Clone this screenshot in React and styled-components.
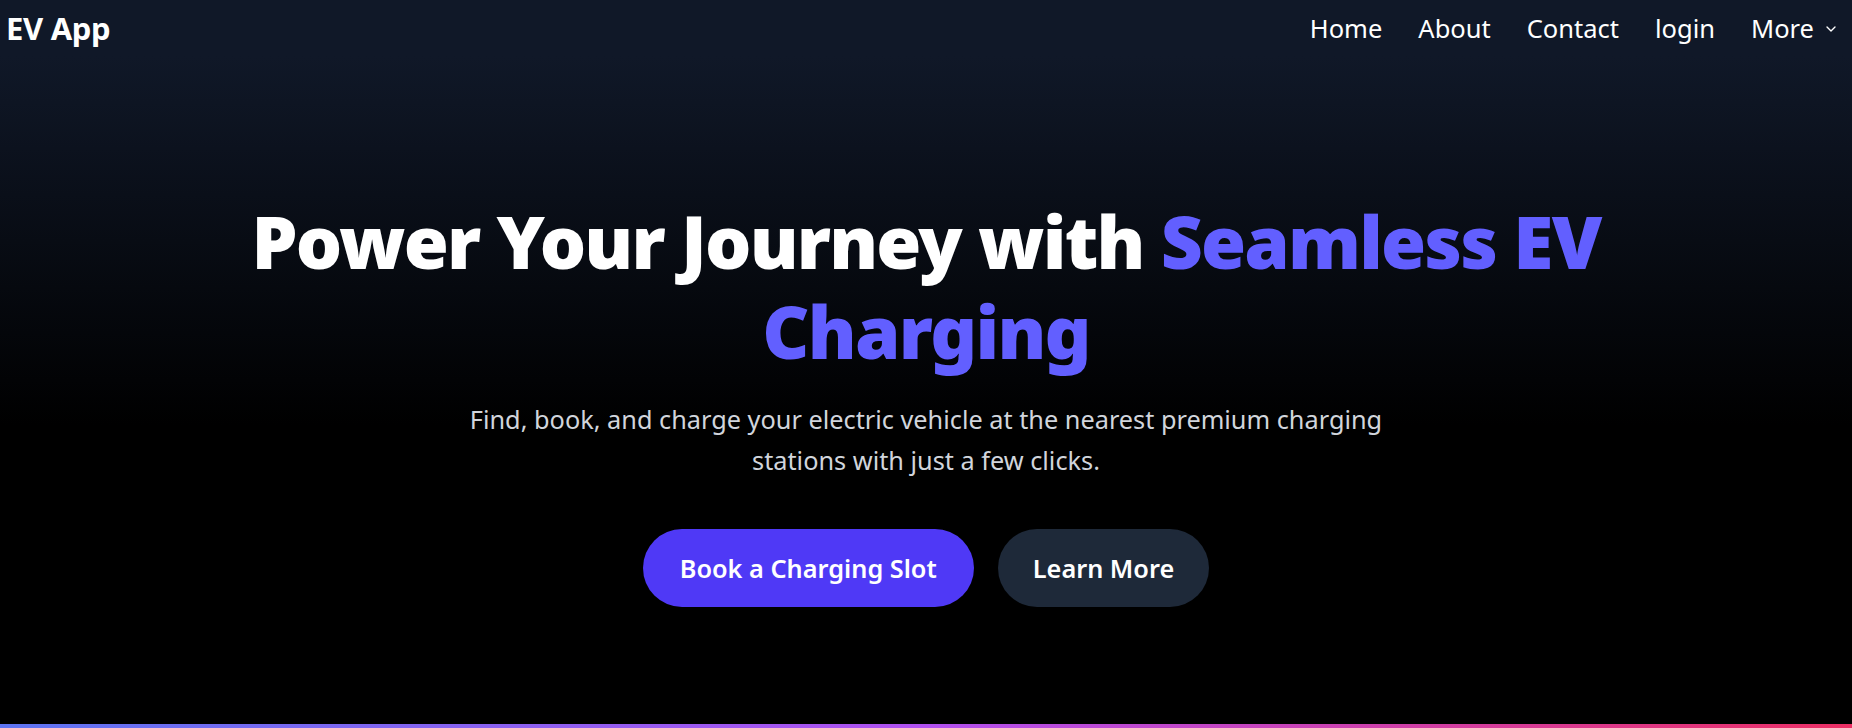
import React from "react"
import styled, { createGlobalStyle } from "styled-components"
import { ChevronDown } from "lucide-react"

const GlobalStyle = createGlobalStyle`
  html, body {
    margin: 0;
    padding: 0;
    background: #000;
  }
  body {
    font-family: "Noto Sans", "Open Sans", sans-serif;
    color: #fff;
  }
  * {
    box-sizing: border-box;
  }
`

const navLinks = ["Home", "About", "Contact", "login"]

const App = () => (
  <>
    <GlobalStyle />
    <Page>
      <NavBar>
        <Brand>EV App</Brand>
        <NavList>
          {navLinks.map(link => (
            <NavItem key={link}>{link}</NavItem>
          ))}
          <NavItem>
            More
            <Chevron size={16} strokeWidth={2} />
          </NavItem>
        </NavList>
      </NavBar>

      <Hero>
        <HeroInner>
          <Headline>
            Power Your Journey with <Accent>Seamless EV Charging</Accent>
          </Headline>
          <Lead>
            Find, book, and charge your electric vehicle at the nearest premium
            charging stations with just a few clicks.
          </Lead>
          <Actions>
            <PillButton variant="primary">Book a Charging Slot</PillButton>
            <PillButton variant="secondary">Learn More</PillButton>
          </Actions>
        </HeroInner>
      </Hero>

      <GradientRule />
    </Page>
  </>
)

const Page = styled.div`
  min-height: 728px;
  display: flex;
  flex-direction: column;
  background: #000;
`

const NavBar = styled.nav`
  height: 56px;
  display: flex;
  align-items: center;
  justify-content: space-between;
  padding: 0 13px 0 6px;
  background: #101828;
`

const Brand = styled.div`
  font-size: 31px;
  font-weight: 700;
  letter-spacing: -0.3px;
`

const NavList = styled.ul`
  display: flex;
  align-items: center;
  gap: 36px;
  list-style: none;
  margin: 0;
  padding: 0;
`

const NavItem = styled.li`
  display: flex;
  align-items: center;
  font-size: 25.5px;
  font-weight: 400;
  cursor: pointer;
`

const Chevron = styled(ChevronDown)`
  margin-left: 9px;
  margin-top: 2px;
`

const Hero = styled.section`
  height: 668px;
  background: linear-gradient(180deg, #101828 0px, #000 370px);
`

const HeroInner = styled.div`
  max-width: 1440px;
  margin: 0 auto;
  padding-top: 140px;
  display: flex;
  flex-direction: column;
  align-items: center;
  text-align: center;
`

const Headline = styled.h1`
  margin: 0;
  font-size: 73px;
  line-height: 90px;
  font-weight: 900;
  letter-spacing: -1.8px;
  color: #fff;
`

const Accent = styled.span`
  color: #625fff;
`

const Lead = styled.p`
  max-width: 960px;
  margin: 23px 0 0;
  font-size: 25.3px;
  line-height: 41px;
  color: #d1d5dc;
`

const Actions = styled.div`
  display: flex;
  gap: 24px;
  margin-top: 48px;
`

const PillButton = styled.button`
  height: 78px;
  padding: 0 ${props => (props.variant === "primary" ? "37px" : "35px")};
  border: none;
  border-radius: 9999px;
  font-family: inherit;
  font-size: 25.3px;
  font-weight: 600;
  color: #fff;
  cursor: pointer;
  background: ${props => (props.variant === "primary" ? "#4f39f6" : "#1e2939")};
`

const GradientRule = styled.div`
  height: 4px;
  background: linear-gradient(90deg, #5d74f2 0%, #b150f0 50%, #ec2f64 100%);
`

export default App
